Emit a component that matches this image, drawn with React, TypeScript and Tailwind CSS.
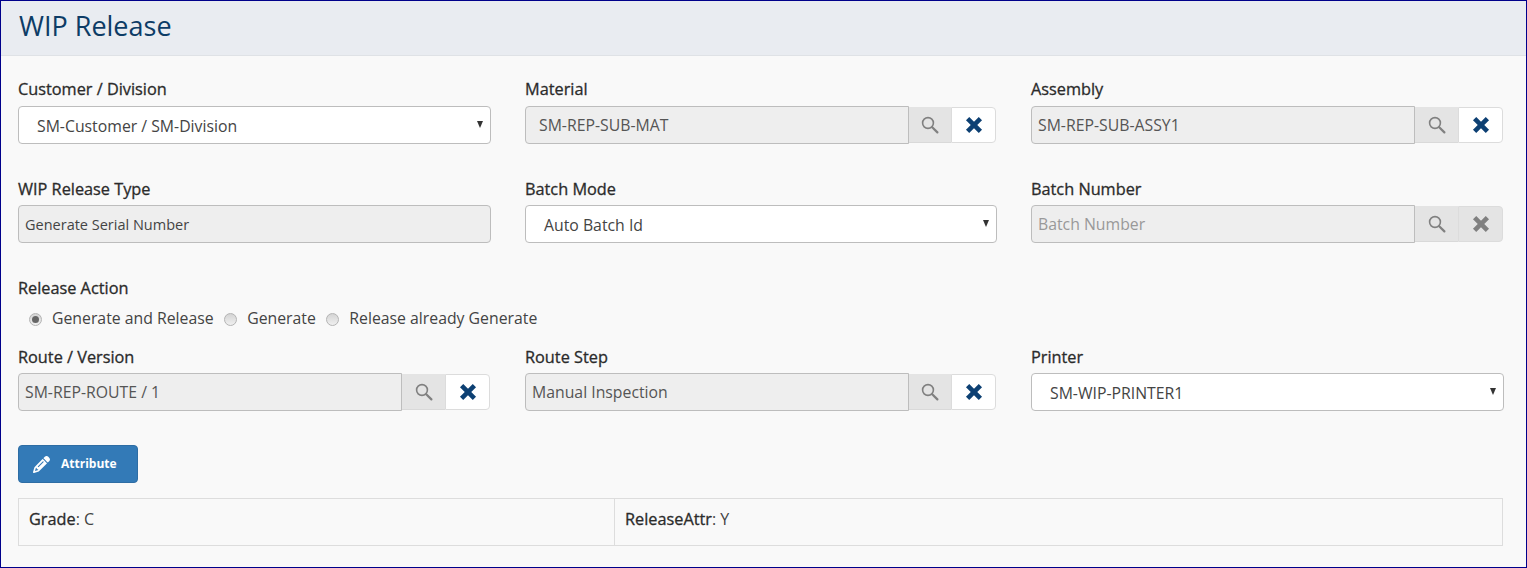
import { FaPencil } from 'react-icons/fa6';

function Label({ children }: { children: React.ReactNode }) {
  return (
    <label className="block h-[17px] text-[16.3px] leading-[17px] text-[#2b2b2b] [-webkit-text-stroke:0.3px_#2b2b2b]">
      {children}
    </label>
  );
}

function SearchIcon() {
  return (
    <svg width="18" height="18" viewBox="0 0 18 18" fill="none" stroke="#808080">
      <circle cx="7" cy="7" r="5.4" strokeWidth="1.6" />
      <path d="M11.2 11.2 L16.4 16.4" strokeWidth="2.2" strokeLinecap="round" />
    </svg>
  );
}

function CloseIcon({ muted }: { muted?: boolean }) {
  return (
    <svg width="18" height="18" viewBox="0 0 18 18" fill="none">
      <path
        d="M2.6 2.6 L15.4 15.4 M15.4 2.6 L2.6 15.4"
        stroke={muted ? '#808080' : '#0d4073'}
        strokeWidth="4.6"
      />
    </svg>
  );
}

function SelectBox({ value }: { value: string }) {
  return (
    <div className="field mt-[8px] flex h-[38px] items-center justify-between rounded-[4px] border border-[#bdbdbd] bg-white pr-[7px] pl-[18px] text-[15.8px] text-[#444]">
      <span className="pt-[3px]">{value}</span>
      <span className="mb-[2px] h-0 w-0 border-x-[3.5px] border-t-[7px] border-x-transparent border-t-[#333]" />
    </div>
  );
}

function LookupField({
  value,
  placeholder,
  disabled,
  narrow,
  inset,
}: {
  value?: string;
  placeholder?: string;
  disabled?: boolean;
  narrow?: boolean;
  inset?: boolean;
}) {
  return (
    <div className="field mt-[8px] flex h-[38px] items-stretch">
      <div
        className={`flex w-[384px] min-w-0 items-center rounded-l-[4px] border border-[#bdbdbd] bg-[#eeeeee] pt-[2px] pr-[6px] text-[15.8px] ${
          inset ? 'pl-[13px]' : 'pl-[6px]'
        } ${placeholder ? 'text-[#999]' : 'text-[#555]'}`}
      >
        {value ?? placeholder}
      </div>
      <div
        className={`my-[1px] flex items-center justify-center border-b border-[#d9d9d9] bg-[#e4e4e4] ${
          narrow ? 'w-[42px]' : 'w-[43px]'
        }`}
      >
        <SearchIcon />
      </div>
      <div
        className={`my-[1px] flex w-[45px] items-center justify-center rounded-r-[4px] border border-[#dcdcdc] ${
          disabled ? 'bg-[#e4e4e4]' : 'bg-white'
        }`}
      >
        <CloseIcon muted={disabled} />
      </div>
    </div>
  );
}

function Radio({ label, checked }: { label: string; checked?: boolean }) {
  return (
    <span className="flex items-center">
      <span className="flex h-[13px] w-[13px] items-center justify-center rounded-full border border-[#b4b4b4] bg-gradient-to-b from-[#d4d4d4] to-[#f0f0f0]">
        {checked && <span className="h-[7px] w-[7px] rounded-full bg-[#666]" />}
      </span>
      <span className="ml-[10px]">{label}</span>
    </span>
  );
}

export default function App() {
  return (
    <div className="h-[568px] overflow-hidden border border-[#00008b] bg-[#f9f9f9] font-['Open_Sans',sans-serif]">
      <div className="flex h-[55px] items-center border-b border-[#dfe2e6] bg-[#e9ecf1] pb-[6px] pl-[18px]">
        <h1 className="text-[27px] leading-none text-[#0d3c66]">WIP Release</h1>
      </div>

      <div className="pr-[22px] pl-[17px]">
        <div className="grid grid-cols-[473px_472px_473px] gap-x-[34px] pt-[25px]">
          <div>
            <Label>Customer / Division</Label>
            <SelectBox value="SM-Customer / SM-Division" />
          </div>
          <div>
            <Label>Material</Label>
            <LookupField value="SM-REP-SUB-MAT" narrow inset />
          </div>
          <div>
            <Label>Assembly</Label>
            <LookupField value="SM-REP-SUB-ASSY1" />
          </div>
        </div>

        <div className="grid grid-cols-[473px_472px_473px] gap-x-[34px] pt-[37px] [&_.field]:mt-[7px]">
          <div>
            <Label>WIP Release Type</Label>
            <div className="mt-[7px] flex h-[38px] items-center rounded-[4px] border border-[#bdbdbd] bg-[#eeeeee] px-[6px] pt-[1px] text-[14.5px] text-[#444]">
              Generate Serial Number
            </div>
          </div>
          <div>
            <Label>Batch Mode</Label>
            <SelectBox value="Auto Batch Id" />
          </div>
          <div>
            <Label>Batch Number</Label>
            <LookupField placeholder="Batch Number" disabled />
          </div>
        </div>

        <div className="pt-[37px]">
          <Label>Release Action</Label>
          <div className="mt-[12px] flex h-[20px] items-center gap-[10.5px] pl-[11px] text-[15.8px] text-[#444]">
            <Radio label="Generate and Release" checked />
            <Radio label="Generate" />
            <Radio label="Release already Generate" />
          </div>
        </div>

        <div className="grid grid-cols-[473px_472px_473px] gap-x-[34px] pt-[20px] [&_.field]:mt-[7px]">
          <div>
            <Label>Route / Version</Label>
            <LookupField value="SM-REP-ROUTE / 1" />
          </div>
          <div>
            <Label>Route Step</Label>
            <LookupField value="Manual Inspection" narrow />
          </div>
          <div>
            <Label>Printer</Label>
            <SelectBox value="SM-WIP-PRINTER1" />
          </div>
        </div>

        <button className="mt-[34px] flex h-[38px] w-[120px] items-center rounded-[4px] border border-[#2e6da4] bg-[#337ab7] pl-[14px] text-[12px] font-bold text-white">
          <FaPencil className="mr-[11px] text-[17px]" />
          Attribute
        </button>

        <div className="mt-[15px] flex h-[48px] w-[1485px] border border-[#dddddd] text-[16px] text-[#444]">
          <div className="w-[596px] border-r border-[#dddddd] pt-[8px] pl-[10px]">
            <span className="text-[16.3px] text-[#2b2b2b] [-webkit-text-stroke:0.3px_#2b2b2b]">Grade</span>: C
          </div>
          <div className="pt-[8px] pl-[10px]">
            <span className="text-[16.3px] text-[#2b2b2b] [-webkit-text-stroke:0.3px_#2b2b2b]">ReleaseAttr</span>: Y
          </div>
        </div>
      </div>
    </div>
  );
}
